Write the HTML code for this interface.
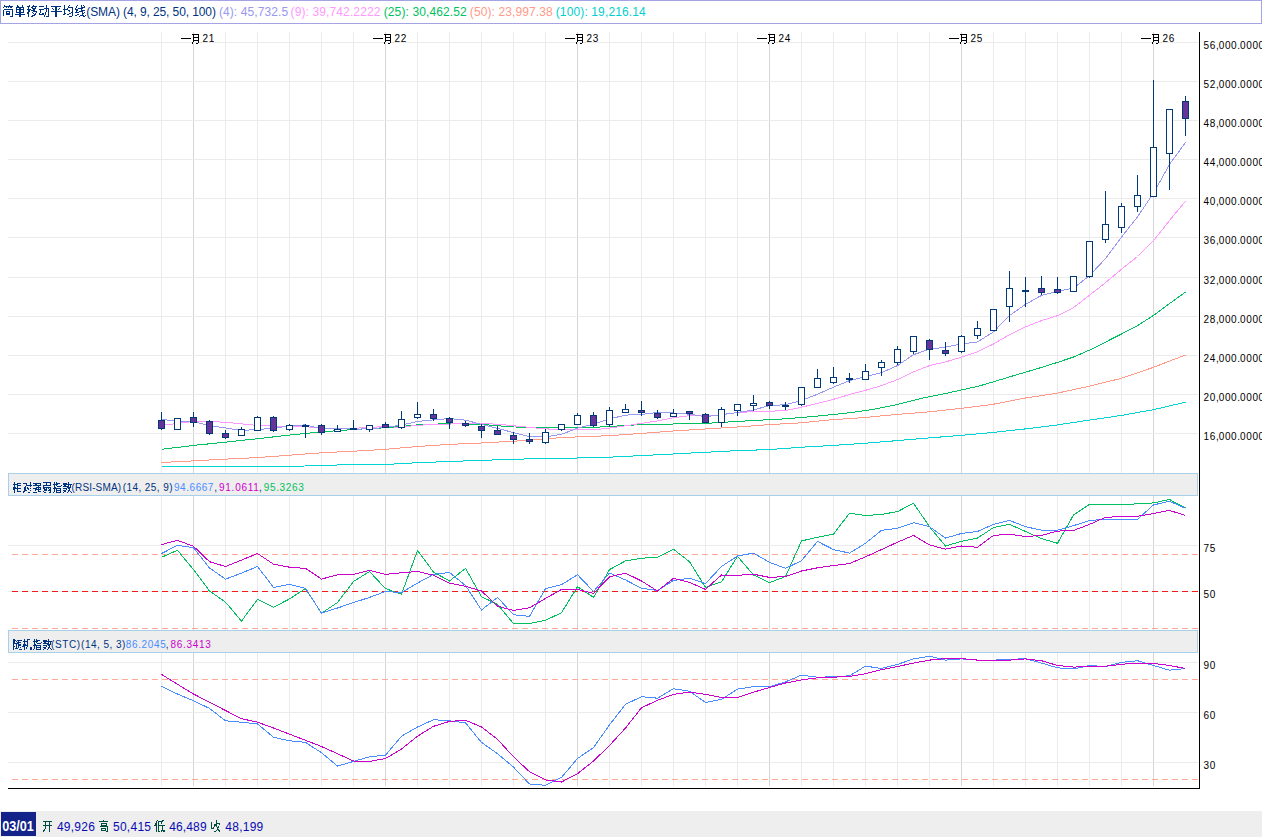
<!DOCTYPE html>
<html><head><meta charset="utf-8">
<style>
html,body{margin:0;padding:0;background:#fff;}
body{width:1262px;height:837px;position:relative;overflow:hidden;}
svg{position:absolute;left:0;top:0;display:block;}
text{font-family:"Liberation Sans",sans-serif;white-space:pre;}
</style></head><body>
<svg width="1262" height="837" viewBox="0 0 1262 837" shape-rendering="crispEdges">
<rect x="161" y="32" width="1" height="754" fill="#ebebeb"/>
<rect x="193" y="32" width="1" height="754" fill="#d6d6d6"/>
<rect x="225" y="32" width="1" height="754" fill="#ebebeb"/>
<rect x="257" y="32" width="1" height="754" fill="#ebebeb"/>
<rect x="289" y="32" width="1" height="754" fill="#ebebeb"/>
<rect x="321" y="32" width="1" height="754" fill="#ebebeb"/>
<rect x="353" y="32" width="1" height="754" fill="#ebebeb"/>
<rect x="385" y="32" width="1" height="754" fill="#d6d6d6"/>
<rect x="417" y="32" width="1" height="754" fill="#ebebeb"/>
<rect x="449" y="32" width="1" height="754" fill="#ebebeb"/>
<rect x="481" y="32" width="1" height="754" fill="#ebebeb"/>
<rect x="513" y="32" width="1" height="754" fill="#ebebeb"/>
<rect x="545" y="32" width="1" height="754" fill="#ebebeb"/>
<rect x="577" y="32" width="1" height="754" fill="#d6d6d6"/>
<rect x="609" y="32" width="1" height="754" fill="#ebebeb"/>
<rect x="641" y="32" width="1" height="754" fill="#ebebeb"/>
<rect x="673" y="32" width="1" height="754" fill="#ebebeb"/>
<rect x="705" y="32" width="1" height="754" fill="#ebebeb"/>
<rect x="737" y="32" width="1" height="754" fill="#ebebeb"/>
<rect x="769" y="32" width="1" height="754" fill="#d6d6d6"/>
<rect x="801" y="32" width="1" height="754" fill="#ebebeb"/>
<rect x="833" y="32" width="1" height="754" fill="#ebebeb"/>
<rect x="865" y="32" width="1" height="754" fill="#ebebeb"/>
<rect x="897" y="32" width="1" height="754" fill="#ebebeb"/>
<rect x="929" y="32" width="1" height="754" fill="#ebebeb"/>
<rect x="961" y="32" width="1" height="754" fill="#d6d6d6"/>
<rect x="993" y="32" width="1" height="754" fill="#ebebeb"/>
<rect x="1025" y="32" width="1" height="754" fill="#ebebeb"/>
<rect x="1057" y="32" width="1" height="754" fill="#ebebeb"/>
<rect x="1089" y="32" width="1" height="754" fill="#ebebeb"/>
<rect x="1121" y="32" width="1" height="754" fill="#ebebeb"/>
<rect x="1153" y="32" width="1" height="754" fill="#d6d6d6"/>
<rect x="8" y="42" width="1190" height="1" fill="#ebebeb"/>
<rect x="8" y="81" width="1190" height="1" fill="#ebebeb"/>
<rect x="8" y="120" width="1190" height="1" fill="#ebebeb"/>
<rect x="8" y="159" width="1190" height="1" fill="#ebebeb"/>
<rect x="8" y="198" width="1190" height="1" fill="#ebebeb"/>
<rect x="8" y="237" width="1190" height="1" fill="#ebebeb"/>
<rect x="8" y="277" width="1190" height="1" fill="#ebebeb"/>
<rect x="8" y="316" width="1190" height="1" fill="#ebebeb"/>
<rect x="8" y="355" width="1190" height="1" fill="#ebebeb"/>
<rect x="8" y="394" width="1190" height="1" fill="#ebebeb"/>
<rect x="8" y="433" width="1190" height="1" fill="#ebebeb"/>
<rect x="8" y="545" width="1190" height="1" fill="#ebebeb"/>
<rect x="8" y="591" width="1190" height="1" fill="#ebebeb"/>
<rect x="8" y="662" width="1190" height="1" fill="#ebebeb"/>
<rect x="8" y="712" width="1190" height="1" fill="#ebebeb"/>
<rect x="8" y="762" width="1190" height="1" fill="#ebebeb"/>
<line x1="12" y1="554.5" x2="1198" y2="554.5" stroke="#ffa898" stroke-width="1" stroke-dasharray="6 4"/>
<line x1="12" y1="591.5" x2="1198" y2="591.5" stroke="#ee1c1c" stroke-width="1" stroke-dasharray="6 4"/>
<line x1="12" y1="628.5" x2="1198" y2="628.5" stroke="#ffa898" stroke-width="1" stroke-dasharray="6 4"/>
<line x1="12" y1="679.5" x2="1198" y2="679.5" stroke="#ffa898" stroke-width="1" stroke-dasharray="6 4"/>
<line x1="12" y1="779.5" x2="1198" y2="779.5" stroke="#ffa898" stroke-width="1" stroke-dasharray="6 4"/>
<polyline points="161.5,466.4 177.5,466.4 193.5,466.4 209.5,466.3 225.5,466.3 241.5,466.3 257.5,466.3 273.5,466.2 289.5,466.2 305.5,466.0 321.5,465.5 337.5,465.0 353.5,464.6 369.5,464.5 385.5,464.5 401.5,463.6 417.5,462.7 433.5,462.1 449.5,461.5 465.5,460.9 481.5,460.4 497.5,459.8 513.5,459.2 529.5,458.9 545.5,458.7 561.5,458.5 577.5,458.0 593.5,457.6 609.5,457.2 625.5,456.4 641.5,455.6 657.5,454.8 673.5,454.0 689.5,453.1 705.5,452.3 721.5,451.5 737.5,450.6 753.5,450.1 769.5,449.6 785.5,448.4 801.5,447.2 817.5,446.3 833.5,445.4 849.5,444.3 865.5,443.2 881.5,441.9 897.5,440.6 913.5,439.2 929.5,437.9 945.5,436.6 961.5,435.3 977.5,433.9 993.5,432.4 1009.5,430.6 1025.5,428.9 1041.5,426.9 1057.5,424.9 1073.5,422.5 1089.5,420.1 1105.5,417.8 1121.5,415.4 1137.5,412.5 1153.5,409.7 1169.5,405.9 1185.5,402.2" fill="none" stroke="#00d4d4" stroke-width="1"/>
<polyline points="161.5,462.5 177.5,461.7 193.5,460.9 209.5,460.0 225.5,459.1 241.5,458.4 257.5,457.6 273.5,456.4 289.5,455.2 305.5,454.0 321.5,452.8 337.5,452.0 353.5,451.2 369.5,450.3 385.5,449.3 401.5,447.9 417.5,446.5 433.5,445.4 449.5,444.4 465.5,443.7 481.5,443.0 497.5,442.1 513.5,441.3 529.5,440.1 545.5,438.8 561.5,437.6 577.5,436.9 593.5,436.3 609.5,435.7 625.5,434.5 641.5,433.4 657.5,432.2 673.5,431.0 689.5,430.0 705.5,429.0 721.5,428.0 737.5,427.0 753.5,425.8 769.5,424.6 785.5,423.7 801.5,422.8 817.5,421.2 833.5,419.6 849.5,418.6 865.5,417.5 881.5,415.9 897.5,414.4 913.5,413.1 929.5,411.8 945.5,410.1 961.5,408.3 977.5,406.4 993.5,404.2 1009.5,401.1 1025.5,398.0 1041.5,395.6 1057.5,393.1 1073.5,389.6 1089.5,386.2 1105.5,382.2 1121.5,378.3 1137.5,372.8 1153.5,367.3 1169.5,361.1 1185.5,355.0" fill="none" stroke="#ff9a88" stroke-width="1"/>
<polyline points="161.5,449.3 177.5,447.4 193.5,445.4 209.5,443.8 225.5,442.2 241.5,440.4 257.5,438.7 273.5,436.9 289.5,435.1 305.5,433.5 321.5,431.9 337.5,430.7 353.5,429.5 369.5,428.6 385.5,427.8 401.5,426.4 417.5,424.9 433.5,424.2 449.5,423.5 465.5,423.9 481.5,424.4 497.5,425.7 513.5,427.0 529.5,427.1 545.5,427.6 561.5,427.4 577.5,427.3 593.5,427.4 609.5,426.5 625.5,425.4 641.5,424.7 657.5,424.7 673.5,424.0 689.5,423.5 705.5,423.4 721.5,422.4 737.5,421.5 753.5,420.5 769.5,419.7 785.5,418.8 801.5,417.5 817.5,416.1 833.5,414.5 849.5,412.7 865.5,410.6 881.5,407.8 897.5,404.4 913.5,400.3 929.5,396.6 945.5,393.5 961.5,389.9 977.5,386.5 993.5,381.8 1009.5,376.9 1025.5,372.2 1041.5,367.4 1057.5,362.4 1073.5,357.0 1089.5,350.1 1105.5,342.1 1121.5,334.0 1137.5,325.6 1153.5,315.4 1169.5,303.6 1185.5,292.1" fill="none" stroke="#00c060" stroke-width="1"/>
<polyline points="161.5,425.4 177.5,423.5 193.5,421.4 209.5,421.6 225.5,422.2 241.5,423.9 257.5,425.4 273.5,426.0 289.5,426.9 305.5,426.7 321.5,428.3 337.5,429.0 353.5,428.5 369.5,427.1 385.5,426.9 401.5,427.1 417.5,425.3 433.5,424.5 449.5,424.1 465.5,423.3 481.5,423.5 497.5,424.2 513.5,425.8 529.5,427.4 545.5,428.8 561.5,429.9 577.5,429.5 593.5,429.9 609.5,428.1 625.5,425.8 641.5,423.4 657.5,420.9 673.5,417.7 689.5,415.7 705.5,415.5 721.5,414.9 737.5,412.5 753.5,411.7 769.5,411.3 785.5,410.5 801.5,407.2 817.5,403.4 833.5,399.3 849.5,394.5 865.5,390.3 881.5,385.6 897.5,379.6 913.5,371.9 929.5,365.6 945.5,361.9 961.5,357.2 977.5,351.8 993.5,344.0 1009.5,334.7 1025.5,326.9 1041.5,320.6 1057.5,315.7 1073.5,307.6 1089.5,295.2 1105.5,282.7 1121.5,269.2 1137.5,256.5 1153.5,240.8 1169.5,220.5 1185.5,201.2" fill="none" stroke="#ff99ff" stroke-width="1"/>
<polyline points="161.5,419.1 177.5,421.6 193.5,421.6 209.5,425.7 225.5,427.9 241.5,430.6 257.5,429.3 273.5,428.6 289.5,425.6 305.5,424.9 321.5,428.8 337.5,428.3 353.5,429.1 369.5,428.9 385.5,427.4 401.5,425.1 417.5,421.5 433.5,419.8 449.5,418.6 465.5,420.2 481.5,424.3 497.5,428.3 513.5,432.6 529.5,436.6 545.5,436.8 561.5,434.3 577.5,428.2 593.5,424.2 609.5,418.9 625.5,415.1 641.5,414.4 657.5,412.5 673.5,413.0 689.5,414.2 705.5,416.7 721.5,414.6 737.5,412.5 753.5,409.9 769.5,405.6 785.5,404.7 801.5,400.5 817.5,394.2 833.5,387.2 849.5,380.6 865.5,376.6 881.5,372.6 897.5,365.6 913.5,354.7 929.5,349.2 945.5,347.1 961.5,343.9 977.5,341.9 993.5,331.9 1009.5,315.6 1025.5,304.4 1041.5,295.4 1057.5,291.2 1073.5,288.2 1089.5,275.6 1105.5,258.6 1121.5,237.1 1137.5,216.8 1153.5,193.2 1169.5,164.4 1185.5,142.5" fill="none" stroke="#9898f0" stroke-width="1"/>
<rect x="161" y="412" width="1" height="18" fill="#003878"/>
<rect x="158.5" y="420.5" width="6" height="8" fill="#663399" stroke="#003878" stroke-width="1"/>
<rect x="177" y="418" width="1" height="12" fill="#003878"/>
<rect x="174.5" y="418.5" width="6" height="11" fill="#ffffff" stroke="#003878" stroke-width="1"/>
<rect x="193" y="412" width="1" height="15" fill="#003878"/>
<rect x="190.5" y="417.5" width="6" height="5" fill="#663399" stroke="#003878" stroke-width="1"/>
<rect x="209" y="420" width="1" height="15" fill="#003878"/>
<rect x="206.5" y="421.5" width="6" height="12" fill="#663399" stroke="#003878" stroke-width="1"/>
<rect x="225" y="430" width="1" height="9" fill="#003878"/>
<rect x="222.5" y="433.5" width="6" height="4" fill="#663399" stroke="#003878" stroke-width="1"/>
<rect x="241" y="427" width="1" height="9" fill="#003878"/>
<rect x="238.5" y="429.5" width="6" height="6" fill="#ffffff" stroke="#003878" stroke-width="1"/>
<rect x="257" y="416" width="1" height="15" fill="#003878"/>
<rect x="254.5" y="417.5" width="6" height="13" fill="#ffffff" stroke="#003878" stroke-width="1"/>
<rect x="273" y="416" width="1" height="16" fill="#003878"/>
<rect x="270.5" y="417.5" width="6" height="13" fill="#663399" stroke="#003878" stroke-width="1"/>
<rect x="289" y="424" width="1" height="7" fill="#003878"/>
<rect x="286.5" y="425.5" width="6" height="4" fill="#ffffff" stroke="#003878" stroke-width="1"/>
<rect x="305" y="424" width="1" height="14" fill="#003878"/>
<rect x="302.5" y="425.5" width="6" height="1" fill="#663399" stroke="#003878" stroke-width="1"/>
<rect x="321" y="424" width="1" height="11" fill="#003878"/>
<rect x="318.5" y="425.5" width="6" height="7" fill="#663399" stroke="#003878" stroke-width="1"/>
<rect x="337" y="425" width="1" height="7" fill="#003878"/>
<rect x="334.5" y="429.5" width="6" height="2" fill="#ffffff" stroke="#003878" stroke-width="1"/>
<rect x="353" y="420" width="1" height="9" fill="#003878"/>
<rect x="350.5" y="428.5" width="6" height="1" fill="#663399" stroke="#003878" stroke-width="1"/>
<rect x="369" y="425" width="1" height="7" fill="#003878"/>
<rect x="366.5" y="425.5" width="6" height="4" fill="#ffffff" stroke="#003878" stroke-width="1"/>
<rect x="385" y="422" width="1" height="6" fill="#003878"/>
<rect x="382.5" y="424.5" width="6" height="3" fill="#663399" stroke="#003878" stroke-width="1"/>
<rect x="401" y="411" width="1" height="18" fill="#003878"/>
<rect x="398.5" y="419.5" width="6" height="8" fill="#ffffff" stroke="#003878" stroke-width="1"/>
<rect x="417" y="402" width="1" height="17" fill="#003878"/>
<rect x="414.5" y="414.5" width="6" height="3" fill="#ffffff" stroke="#003878" stroke-width="1"/>
<rect x="433" y="409" width="1" height="12" fill="#003878"/>
<rect x="430.5" y="414.5" width="6" height="4" fill="#663399" stroke="#003878" stroke-width="1"/>
<rect x="449" y="417" width="1" height="12" fill="#003878"/>
<rect x="446.5" y="418.5" width="6" height="4" fill="#663399" stroke="#003878" stroke-width="1"/>
<rect x="465" y="421" width="1" height="6" fill="#003878"/>
<rect x="462.5" y="423.5" width="6" height="2" fill="#663399" stroke="#003878" stroke-width="1"/>
<rect x="481" y="424" width="1" height="14" fill="#003878"/>
<rect x="478.5" y="426.5" width="6" height="4" fill="#663399" stroke="#003878" stroke-width="1"/>
<rect x="497" y="426" width="1" height="9" fill="#003878"/>
<rect x="494.5" y="430.5" width="6" height="4" fill="#663399" stroke="#003878" stroke-width="1"/>
<rect x="513" y="432" width="1" height="12" fill="#003878"/>
<rect x="510.5" y="435.5" width="6" height="4" fill="#663399" stroke="#003878" stroke-width="1"/>
<rect x="529" y="433" width="1" height="11" fill="#003878"/>
<rect x="526.5" y="439.5" width="6" height="2" fill="#663399" stroke="#003878" stroke-width="1"/>
<rect x="545" y="429" width="1" height="15" fill="#003878"/>
<rect x="542.5" y="432.5" width="6" height="10" fill="#ffffff" stroke="#003878" stroke-width="1"/>
<rect x="561" y="424" width="1" height="7" fill="#003878"/>
<rect x="558.5" y="424.5" width="6" height="5" fill="#ffffff" stroke="#003878" stroke-width="1"/>
<rect x="577" y="413" width="1" height="12" fill="#003878"/>
<rect x="574.5" y="415.5" width="6" height="9" fill="#ffffff" stroke="#003878" stroke-width="1"/>
<rect x="593" y="412" width="1" height="15" fill="#003878"/>
<rect x="590.5" y="415.5" width="6" height="10" fill="#663399" stroke="#003878" stroke-width="1"/>
<rect x="609" y="407" width="1" height="20" fill="#003878"/>
<rect x="606.5" y="410.5" width="6" height="14" fill="#ffffff" stroke="#003878" stroke-width="1"/>
<rect x="625" y="404" width="1" height="9" fill="#003878"/>
<rect x="622.5" y="409.5" width="6" height="3" fill="#ffffff" stroke="#003878" stroke-width="1"/>
<rect x="641" y="401" width="1" height="15" fill="#003878"/>
<rect x="638.5" y="410.5" width="6" height="2" fill="#663399" stroke="#003878" stroke-width="1"/>
<rect x="657" y="410" width="1" height="9" fill="#003878"/>
<rect x="654.5" y="413.5" width="6" height="4" fill="#663399" stroke="#003878" stroke-width="1"/>
<rect x="673" y="409" width="1" height="8" fill="#003878"/>
<rect x="670.5" y="413.5" width="6" height="3" fill="#ffffff" stroke="#003878" stroke-width="1"/>
<rect x="689" y="411" width="1" height="9" fill="#003878"/>
<rect x="686.5" y="411.5" width="6" height="2" fill="#663399" stroke="#003878" stroke-width="1"/>
<rect x="705" y="413" width="1" height="10" fill="#003878"/>
<rect x="702.5" y="414.5" width="6" height="8" fill="#663399" stroke="#003878" stroke-width="1"/>
<rect x="721" y="407" width="1" height="20" fill="#003878"/>
<rect x="718.5" y="409.5" width="6" height="13" fill="#ffffff" stroke="#003878" stroke-width="1"/>
<rect x="737" y="404" width="1" height="12" fill="#003878"/>
<rect x="734.5" y="404.5" width="6" height="6" fill="#ffffff" stroke="#003878" stroke-width="1"/>
<rect x="753" y="395" width="1" height="16" fill="#003878"/>
<rect x="750.5" y="403.5" width="6" height="2" fill="#ffffff" stroke="#003878" stroke-width="1"/>
<rect x="769" y="401" width="1" height="8" fill="#003878"/>
<rect x="766.5" y="402.5" width="6" height="3" fill="#663399" stroke="#003878" stroke-width="1"/>
<rect x="785" y="402" width="1" height="8" fill="#003878"/>
<rect x="782.5" y="405.5" width="6" height="1" fill="#663399" stroke="#003878" stroke-width="1"/>
<rect x="801" y="387" width="1" height="19" fill="#003878"/>
<rect x="798.5" y="387.5" width="6" height="17" fill="#ffffff" stroke="#003878" stroke-width="1"/>
<rect x="817" y="369" width="1" height="19" fill="#003878"/>
<rect x="814.5" y="378.5" width="6" height="9" fill="#ffffff" stroke="#003878" stroke-width="1"/>
<rect x="833" y="367" width="1" height="17" fill="#003878"/>
<rect x="830.5" y="377.5" width="6" height="5" fill="#ffffff" stroke="#003878" stroke-width="1"/>
<rect x="849" y="373" width="1" height="10" fill="#003878"/>
<rect x="846.5" y="378.5" width="6" height="1" fill="#663399" stroke="#003878" stroke-width="1"/>
<rect x="865" y="364" width="1" height="16" fill="#003878"/>
<rect x="862.5" y="371.5" width="6" height="8" fill="#ffffff" stroke="#003878" stroke-width="1"/>
<rect x="881" y="360" width="1" height="16" fill="#003878"/>
<rect x="878.5" y="362.5" width="6" height="5" fill="#ffffff" stroke="#003878" stroke-width="1"/>
<rect x="897" y="346" width="1" height="19" fill="#003878"/>
<rect x="894.5" y="349.5" width="6" height="13" fill="#ffffff" stroke="#003878" stroke-width="1"/>
<rect x="913" y="336" width="1" height="18" fill="#003878"/>
<rect x="910.5" y="336.5" width="6" height="15" fill="#ffffff" stroke="#003878" stroke-width="1"/>
<rect x="929" y="339" width="1" height="21" fill="#003878"/>
<rect x="926.5" y="340.5" width="6" height="9" fill="#663399" stroke="#003878" stroke-width="1"/>
<rect x="945" y="342" width="1" height="14" fill="#003878"/>
<rect x="942.5" y="350.5" width="6" height="3" fill="#663399" stroke="#003878" stroke-width="1"/>
<rect x="961" y="335" width="1" height="18" fill="#003878"/>
<rect x="958.5" y="336.5" width="6" height="15" fill="#ffffff" stroke="#003878" stroke-width="1"/>
<rect x="977" y="321" width="1" height="18" fill="#003878"/>
<rect x="974.5" y="328.5" width="6" height="7" fill="#ffffff" stroke="#003878" stroke-width="1"/>
<rect x="993" y="309" width="1" height="22" fill="#003878"/>
<rect x="990.5" y="309.5" width="6" height="21" fill="#ffffff" stroke="#003878" stroke-width="1"/>
<rect x="1009" y="271" width="1" height="51" fill="#003878"/>
<rect x="1006.5" y="288.5" width="6" height="18" fill="#ffffff" stroke="#003878" stroke-width="1"/>
<rect x="1025" y="277" width="1" height="30" fill="#003878"/>
<rect x="1022.5" y="290.5" width="6" height="1" fill="#663399" stroke="#003878" stroke-width="1"/>
<rect x="1041" y="276" width="1" height="19" fill="#003878"/>
<rect x="1038.5" y="288.5" width="6" height="4" fill="#663399" stroke="#003878" stroke-width="1"/>
<rect x="1057" y="277" width="1" height="17" fill="#003878"/>
<rect x="1054.5" y="289.5" width="6" height="3" fill="#663399" stroke="#003878" stroke-width="1"/>
<rect x="1073" y="276" width="1" height="16" fill="#003878"/>
<rect x="1070.5" y="276.5" width="6" height="15" fill="#ffffff" stroke="#003878" stroke-width="1"/>
<rect x="1089" y="241" width="1" height="37" fill="#003878"/>
<rect x="1086.5" y="241.5" width="6" height="35" fill="#ffffff" stroke="#003878" stroke-width="1"/>
<rect x="1105" y="191" width="1" height="52" fill="#003878"/>
<rect x="1102.5" y="224.5" width="6" height="15" fill="#ffffff" stroke="#003878" stroke-width="1"/>
<rect x="1121" y="203" width="1" height="30" fill="#003878"/>
<rect x="1118.5" y="206.5" width="6" height="21" fill="#ffffff" stroke="#003878" stroke-width="1"/>
<rect x="1137" y="175" width="1" height="37" fill="#003878"/>
<rect x="1134.5" y="195.5" width="6" height="11" fill="#ffffff" stroke="#003878" stroke-width="1"/>
<rect x="1153" y="80" width="1" height="117" fill="#003878"/>
<rect x="1150.5" y="147.5" width="6" height="49" fill="#ffffff" stroke="#003878" stroke-width="1"/>
<rect x="1169" y="109" width="1" height="81" fill="#003878"/>
<rect x="1166.5" y="109.5" width="6" height="44" fill="#ffffff" stroke="#003878" stroke-width="1"/>
<rect x="1185" y="96" width="1" height="40" fill="#003878"/>
<rect x="1182.5" y="101.5" width="6" height="17" fill="#663399" stroke="#003878" stroke-width="1"/>
<rect x="8.5" y="473.5" width="1189" height="22" fill="#eeeeee" stroke="#a9d0ea" stroke-width="1"/>
<rect x="8.5" y="630.5" width="1189" height="22" fill="#eeeeee" stroke="#a9d0ea" stroke-width="1"/>
<polyline points="161.5,557.3 177.5,550.3 193.5,569.6 209.5,591.0 225.5,602.1 241.5,621.1 257.5,599.4 273.5,607.3 289.5,598.9 305.5,588.6 321.5,613.2 337.5,602.5 353.5,581.5 369.5,571.5 385.5,588.6 401.5,594.2 417.5,550.6 433.5,572.0 449.5,581.0 465.5,568.4 481.5,596.6 497.5,604.5 513.5,623.5 529.5,623.5 545.5,620.3 561.5,612.7 577.5,586.7 593.5,597.4 609.5,569.6 625.5,560.9 641.5,558.2 657.5,557.3 673.5,549.3 689.5,561.7 705.5,587.4 721.5,581.8 737.5,556.3 753.5,575.0 769.5,582.6 785.5,576.6 801.5,540.9 817.5,537.3 833.5,534.1 849.5,513.2 865.5,515.5 881.5,514.4 897.5,511.6 913.5,503.2 929.5,526.7 945.5,546.0 961.5,541.3 977.5,538.1 993.5,527.5 1009.5,524.3 1025.5,531.5 1041.5,538.6 1057.5,543.3 1073.5,515.0 1089.5,504.4 1105.5,504.4 1121.5,504.4 1137.5,503.9 1153.5,502.9 1169.5,499.5 1185.5,508.0" fill="none" stroke="#00c060" stroke-width="1"/>
<polyline points="161.5,553.5 177.5,545.4 193.5,547.7 209.5,568.0 225.5,579.1 241.5,573.1 257.5,566.5 273.5,587.4 289.5,584.4 305.5,588.3 321.5,613.2 337.5,608.0 353.5,602.6 369.5,597.4 385.5,591.5 401.5,592.6 417.5,583.1 433.5,574.4 449.5,572.5 465.5,585.5 481.5,610.0 497.5,597.4 513.5,614.8 529.5,616.4 545.5,588.6 561.5,584.7 577.5,574.7 593.5,591.5 609.5,573.1 625.5,579.9 641.5,588.3 657.5,590.5 673.5,580.4 689.5,578.3 705.5,583.6 721.5,566.5 737.5,556.0 753.5,553.1 769.5,562.3 785.5,568.3 801.5,560.7 817.5,541.4 833.5,549.6 849.5,553.1 865.5,543.3 881.5,530.3 897.5,528.3 913.5,522.7 929.5,526.7 945.5,538.1 961.5,533.4 977.5,531.5 993.5,524.3 1009.5,520.4 1025.5,526.7 1041.5,530.2 1057.5,530.2 1073.5,525.7 1089.5,520.4 1105.5,519.4 1121.5,519.4 1137.5,519.4 1153.5,504.9 1169.5,501.3 1185.5,508.3" fill="none" stroke="#4a8cff" stroke-width="1"/>
<polyline points="161.5,544.6 177.5,540.3 193.5,546.3 209.5,561.7 225.5,566.5 241.5,560.1 257.5,553.5 273.5,564.1 289.5,567.2 305.5,568.4 321.5,579.1 337.5,574.8 353.5,574.4 369.5,570.4 385.5,574.4 401.5,572.8 417.5,571.5 433.5,575.2 449.5,583.1 465.5,586.3 481.5,591.0 497.5,606.1 513.5,610.5 529.5,607.7 545.5,598.5 561.5,589.4 577.5,589.4 593.5,593.4 609.5,576.8 625.5,573.1 641.5,581.0 657.5,591.0 673.5,578.3 689.5,582.3 705.5,589.4 721.5,575.0 737.5,575.3 753.5,574.2 769.5,577.4 785.5,576.6 801.5,571.0 817.5,567.8 833.5,565.5 849.5,563.6 865.5,556.8 881.5,549.6 897.5,542.2 913.5,535.4 929.5,544.9 945.5,549.2 961.5,546.0 977.5,547.3 993.5,535.4 1009.5,534.3 1025.5,536.5 1041.5,535.4 1057.5,531.1 1073.5,530.5 1089.5,524.4 1105.5,517.3 1121.5,516.6 1137.5,516.3 1153.5,513.5 1169.5,510.4 1185.5,515.5" fill="none" stroke="#cc00cc" stroke-width="1"/>
<polyline points="161.5,686.4 177.5,694.0 193.5,700.8 209.5,708.4 225.5,720.8 241.5,722.2 257.5,723.9 273.5,737.3 289.5,740.8 305.5,742.4 321.5,752.7 337.5,766.1 353.5,761.4 369.5,756.8 385.5,755.2 401.5,736.2 417.5,727.0 433.5,719.7 449.5,720.8 465.5,722.8 481.5,742.4 497.5,753.7 513.5,767.1 529.5,784.0 545.5,785.3 561.5,777.4 577.5,758.5 593.5,747.6 609.5,724.9 625.5,704.3 641.5,696.7 657.5,698.2 673.5,688.7 689.5,691.2 705.5,702.5 721.5,699.4 737.5,689.1 753.5,686.7 769.5,686.7 785.5,681.9 801.5,675.1 817.5,677.2 833.5,676.8 849.5,675.8 865.5,666.1 881.5,668.5 897.5,664.4 913.5,658.9 929.5,656.2 945.5,660.1 961.5,658.9 977.5,660.1 993.5,660.1 1009.5,659.5 1025.5,658.6 1041.5,663.1 1057.5,667.8 1073.5,669.0 1089.5,665.5 1105.5,666.6 1121.5,662.4 1137.5,660.7 1153.5,665.5 1169.5,670.2 1185.5,668.6" fill="none" stroke="#4a8cff" stroke-width="1"/>
<polyline points="161.5,674.4 177.5,684.3 193.5,694.0 209.5,702.2 225.5,710.5 241.5,718.7 257.5,722.2 273.5,728.0 289.5,734.2 305.5,740.3 321.5,746.5 337.5,753.7 353.5,761.0 369.5,761.4 385.5,758.5 401.5,749.1 417.5,736.2 433.5,726.3 449.5,721.4 465.5,720.2 481.5,727.0 497.5,739.3 513.5,756.8 529.5,771.7 545.5,779.9 561.5,782.0 577.5,773.7 593.5,761.0 609.5,745.5 625.5,728.0 641.5,707.8 657.5,700.3 673.5,694.3 689.5,692.2 705.5,694.3 721.5,697.4 737.5,697.4 753.5,692.2 769.5,687.5 785.5,683.0 801.5,679.9 817.5,677.8 833.5,677.2 849.5,676.4 865.5,673.7 881.5,669.6 897.5,666.5 913.5,663.1 929.5,660.1 945.5,658.6 961.5,658.6 977.5,660.1 993.5,660.1 1009.5,660.1 1025.5,658.9 1041.5,660.7 1057.5,665.5 1073.5,667.1 1089.5,666.6 1105.5,666.2 1121.5,664.3 1137.5,663.1 1153.5,663.5 1169.5,665.5 1185.5,668.5" fill="none" stroke="#cc00cc" stroke-width="1"/>
<rect x="1199" y="32" width="1" height="757" fill="#000"/>
<rect x="8" y="788" width="1192" height="1" fill="#000"/>
<text x="1203.55 1209.70 1216.00 1218.75 1224.90 1231.05 1237.35 1240.10 1246.25 1252.40 1258.55" y="49" fill="#000" font-size="10">56,000.0000</text>
<text x="1203.55 1209.70 1216.00 1218.75 1224.90 1231.05 1237.35 1240.10 1246.25 1252.40 1258.55" y="88" fill="#000" font-size="10">52,000.0000</text>
<text x="1203.55 1209.70 1216.00 1218.75 1224.90 1231.05 1237.35 1240.10 1246.25 1252.40 1258.55" y="127" fill="#000" font-size="10">48,000.0000</text>
<text x="1203.55 1209.70 1216.00 1218.75 1224.90 1231.05 1237.35 1240.10 1246.25 1252.40 1258.55" y="166" fill="#000" font-size="10">44,000.0000</text>
<text x="1203.55 1209.70 1216.00 1218.75 1224.90 1231.05 1237.35 1240.10 1246.25 1252.40 1258.55" y="205" fill="#000" font-size="10">40,000.0000</text>
<text x="1203.55 1209.70 1216.00 1218.75 1224.90 1231.05 1237.35 1240.10 1246.25 1252.40 1258.55" y="244" fill="#000" font-size="10">36,000.0000</text>
<text x="1203.55 1209.70 1216.00 1218.75 1224.90 1231.05 1237.35 1240.10 1246.25 1252.40 1258.55" y="284" fill="#000" font-size="10">32,000.0000</text>
<text x="1203.55 1209.70 1216.00 1218.75 1224.90 1231.05 1237.35 1240.10 1246.25 1252.40 1258.55" y="323" fill="#000" font-size="10">28,000.0000</text>
<text x="1203.55 1209.70 1216.00 1218.75 1224.90 1231.05 1237.35 1240.10 1246.25 1252.40 1258.55" y="362" fill="#000" font-size="10">24,000.0000</text>
<text x="1203.55 1209.70 1216.00 1218.75 1224.90 1231.05 1237.35 1240.10 1246.25 1252.40 1258.55" y="401" fill="#000" font-size="10">20,000.0000</text>
<text x="1203.55 1209.70 1216.00 1218.75 1224.90 1231.05 1237.35 1240.10 1246.25 1252.40 1258.55" y="440" fill="#000" font-size="10">16,000.0000</text>
<text x="1203.55 1209.70" y="552" fill="#000" font-size="10">75</text>
<text x="1203.55 1209.70" y="598" fill="#000" font-size="10">50</text>
<text x="1203.55 1209.70" y="669" fill="#000" font-size="10">90</text>
<text x="1203.55 1209.70" y="719" fill="#000" font-size="10">60</text>
<text x="1203.55 1209.70" y="769" fill="#000" font-size="10">30</text>
<rect x="181" y="38" width="10" height="1" fill="#000"/>
<rect x="192" y="34" width="7" height="1" fill="#000"/>
<rect x="193" y="35" width="1" height="7" fill="#000"/>
<rect x="198" y="35" width="1" height="8" fill="#000"/>
<rect x="194" y="37" width="4" height="1" fill="#000"/>
<rect x="194" y="40" width="4" height="1" fill="#000"/>
<rect x="192" y="42" width="1" height="2" fill="#000"/>
<rect x="196" y="43" width="2" height="1" fill="#000"/>
<text x="202.55 208.70" y="42" fill="#000" font-size="10">21</text>
<rect x="373" y="38" width="10" height="1" fill="#000"/>
<rect x="384" y="34" width="7" height="1" fill="#000"/>
<rect x="385" y="35" width="1" height="7" fill="#000"/>
<rect x="390" y="35" width="1" height="8" fill="#000"/>
<rect x="386" y="37" width="4" height="1" fill="#000"/>
<rect x="386" y="40" width="4" height="1" fill="#000"/>
<rect x="384" y="42" width="1" height="2" fill="#000"/>
<rect x="388" y="43" width="2" height="1" fill="#000"/>
<text x="394.55 400.70" y="42" fill="#000" font-size="10">22</text>
<rect x="565" y="38" width="10" height="1" fill="#000"/>
<rect x="576" y="34" width="7" height="1" fill="#000"/>
<rect x="577" y="35" width="1" height="7" fill="#000"/>
<rect x="582" y="35" width="1" height="8" fill="#000"/>
<rect x="578" y="37" width="4" height="1" fill="#000"/>
<rect x="578" y="40" width="4" height="1" fill="#000"/>
<rect x="576" y="42" width="1" height="2" fill="#000"/>
<rect x="580" y="43" width="2" height="1" fill="#000"/>
<text x="586.55 592.70" y="42" fill="#000" font-size="10">23</text>
<rect x="757" y="38" width="10" height="1" fill="#000"/>
<rect x="768" y="34" width="7" height="1" fill="#000"/>
<rect x="769" y="35" width="1" height="7" fill="#000"/>
<rect x="774" y="35" width="1" height="8" fill="#000"/>
<rect x="770" y="37" width="4" height="1" fill="#000"/>
<rect x="770" y="40" width="4" height="1" fill="#000"/>
<rect x="768" y="42" width="1" height="2" fill="#000"/>
<rect x="772" y="43" width="2" height="1" fill="#000"/>
<text x="778.55 784.70" y="42" fill="#000" font-size="10">24</text>
<rect x="949" y="38" width="10" height="1" fill="#000"/>
<rect x="960" y="34" width="7" height="1" fill="#000"/>
<rect x="961" y="35" width="1" height="7" fill="#000"/>
<rect x="966" y="35" width="1" height="8" fill="#000"/>
<rect x="962" y="37" width="4" height="1" fill="#000"/>
<rect x="962" y="40" width="4" height="1" fill="#000"/>
<rect x="960" y="42" width="1" height="2" fill="#000"/>
<rect x="964" y="43" width="2" height="1" fill="#000"/>
<text x="970.55 976.70" y="42" fill="#000" font-size="10">25</text>
<rect x="1141" y="38" width="10" height="1" fill="#000"/>
<rect x="1152" y="34" width="7" height="1" fill="#000"/>
<rect x="1153" y="35" width="1" height="7" fill="#000"/>
<rect x="1158" y="35" width="1" height="8" fill="#000"/>
<rect x="1154" y="37" width="4" height="1" fill="#000"/>
<rect x="1154" y="40" width="4" height="1" fill="#000"/>
<rect x="1152" y="42" width="1" height="2" fill="#000"/>
<rect x="1156" y="43" width="2" height="1" fill="#000"/>
<text x="1162.55 1168.70" y="42" fill="#000" font-size="10">26</text>
<rect x="0.5" y="0.5" width="1261" height="23" fill="none" stroke="#a4a4e4" stroke-width="1"/>
<text x="86.30" y="16" fill="#00337f" font-size="12" font-weight="normal" textLength="129.60" lengthAdjust="spacing">(SMA) (4, 9, 25, 50, 100)</text>
<text x="218.90" y="16" fill="#9898f0" font-size="12" font-weight="normal" textLength="69.30" lengthAdjust="spacing">(4): 45,732.5</text>
<text x="290.60" y="16" fill="#ff99ff" font-size="12" font-weight="normal" textLength="89.80" lengthAdjust="spacing">(9): 39,742.2222</text>
<text x="383.70" y="16" fill="#00c060" font-size="12" font-weight="normal" textLength="83.10" lengthAdjust="spacing">(25): 30,462.52</text>
<text x="469.80" y="16" fill="#ff9a88" font-size="12" font-weight="normal" textLength="82.90" lengthAdjust="spacing">(50): 23,997.38</text>
<text x="555.70" y="16" fill="#00d0d0" font-size="12" font-weight="normal" textLength="90.10" lengthAdjust="spacing">(100): 19,216.14</text>
<text x="71.50" y="491" fill="#00337f" font-size="10" font-weight="normal" textLength="49.60" lengthAdjust="spacing">(RSI-SMA)</text>
<text x="122.80" y="491" fill="#00337f" font-size="10" font-weight="normal" textLength="49.70" lengthAdjust="spacing">(14, 25, 9)</text>
<text x="174.00" y="491" fill="#4a8cff" font-size="10" font-weight="normal" textLength="39.40" lengthAdjust="spacing">94.6667</text>
<text x="214.30" y="491" fill="#00337f" font-size="10">,</text>
<text x="219.00" y="491" fill="#cc00cc" font-size="10" font-weight="normal" textLength="39.90" lengthAdjust="spacing">91.0611</text>
<text x="259.10" y="491" fill="#00337f" font-size="10">,</text>
<text x="263.80" y="491" fill="#00c060" font-size="10" font-weight="normal" textLength="39.90" lengthAdjust="spacing">95.3263</text>
<text x="51.00" y="648" fill="#00337f" font-size="10" font-weight="normal" textLength="29.20" lengthAdjust="spacing">(STC)</text>
<text x="81.10" y="648" fill="#00337f" font-size="10" font-weight="normal" textLength="44.20" lengthAdjust="spacing">(14, 5, 3)</text>
<text x="125.80" y="648" fill="#4a8cff" font-size="10" font-weight="normal" textLength="39.90" lengthAdjust="spacing">86.2045</text>
<text x="165.70" y="648" fill="#00337f" font-size="10">,</text>
<text x="170.50" y="648" fill="#cc00cc" font-size="10" font-weight="normal" textLength="40.40" lengthAdjust="spacing">86.3413</text>
<rect x="0" y="811" width="1262" height="26" fill="#eeeeee"/>
<rect x="1" y="812" width="35" height="24" fill="#13238a"/>
<text x="2.20" y="831" fill="#ffffff" font-size="14" font-weight="bold" textLength="31.70" lengthAdjust="spacingAndGlyphs">03/01</text>
<text x="56.90" y="831" fill="#0a0ab4" font-size="12" font-weight="normal" textLength="38.00" lengthAdjust="spacing">49,926</text>
<text x="113.00" y="831" fill="#0a0ab4" font-size="12" font-weight="normal" textLength="38.00" lengthAdjust="spacing">50,415</text>
<text x="169.20" y="831" fill="#0a0ab4" font-size="12" font-weight="normal" textLength="37.40" lengthAdjust="spacing">46,489</text>
<text x="225.30" y="831" fill="#0a0ab4" font-size="12" font-weight="normal" textLength="38.00" lengthAdjust="spacing">48,199</text>
<path fill="#00337f" d="M4 5h1v1h-1zM9 5h1v1h-1zM17 5h1v1h-1zM22 5h1v1h-1zM29 5h1v1h-1zM33 5h1v1h-1zM46 5h1v1h-1zM64 5h1v1h-1zM69 5h1v1h-1zM77 5h1v1h-1zM81 5h1v1h-1zM83 5h1v1h-1zM4 6h9v1h-9zM17 6h2v1h-2zM22 6h1v1h-1zM27 6h3v1h-3zM32 6h5v1h-5zM39 6h5v1h-5zM46 6h1v1h-1zM51 6h10v1h-10zM64 6h1v1h-1zM68 6h1v1h-1zM76 6h1v1h-1zM81 6h1v1h-1zM84 6h1v1h-1zM3 7h1v1h-1zM6 7h1v1h-1zM8 7h1v1h-1zM10 7h2v1h-2zM16 7h8v1h-8zM28 7h1v1h-1zM31 7h2v1h-2zM35 7h1v1h-1zM46 7h1v1h-1zM55 7h2v1h-2zM64 7h1v1h-1zM68 7h5v1h-5zM76 7h1v1h-1zM81 7h4v1h-4zM16 8h1v1h-1zM19 8h2v1h-2zM23 8h1v1h-1zM28 8h1v1h-1zM32 8h4v1h-4zM44 8h5v1h-5zM52 8h1v1h-1zM55 8h2v1h-2zM59 8h1v1h-1zM64 8h1v1h-1zM67 8h1v1h-1zM72 8h1v1h-1zM75 8h1v1h-1zM78 8h5v1h-5zM4 9h9v1h-9zM16 9h8v1h-8zM27 9h4v1h-4zM33 9h2v1h-2zM39 9h5v1h-5zM46 9h1v1h-1zM48 9h1v1h-1zM53 9h1v1h-1zM55 9h2v1h-2zM58 9h1v1h-1zM63 9h5v1h-5zM72 9h1v1h-1zM75 9h3v1h-3zM81 9h1v1h-1zM3 10h1v1h-1zM12 10h1v1h-1zM16 10h1v1h-1zM19 10h2v1h-2zM23 10h1v1h-1zM28 10h2v1h-2zM31 10h4v1h-4zM40 10h1v1h-1zM46 10h1v1h-1zM48 10h1v1h-1zM55 10h2v1h-2zM64 10h1v1h-1zM68 10h2v1h-2zM72 10h1v1h-1zM76 10h2v1h-2zM81 10h4v1h-4zM3 11h1v1h-1zM6 11h4v1h-4zM12 11h1v1h-1zM16 11h1v1h-1zM19 11h2v1h-2zM23 11h1v1h-1zM28 11h2v1h-2zM33 11h4v1h-4zM40 11h1v1h-1zM46 11h1v1h-1zM48 11h1v1h-1zM51 11h11v1h-11zM64 11h1v1h-1zM69 11h1v1h-1zM72 11h1v1h-1zM76 11h1v1h-1zM79 11h4v1h-4zM3 12h1v1h-1zM6 12h1v1h-1zM9 12h1v1h-1zM12 12h1v1h-1zM16 12h8v1h-8zM27 12h2v1h-2zM32 12h1v1h-1zM36 12h1v1h-1zM40 12h1v1h-1zM45 12h1v1h-1zM48 12h1v1h-1zM55 12h2v1h-2zM64 12h1v1h-1zM71 12h2v1h-2zM75 12h4v1h-4zM82 12h1v1h-1zM84 12h1v1h-1zM3 13h1v1h-1zM6 13h4v1h-4zM12 13h1v1h-1zM19 13h2v1h-2zM27 13h2v1h-2zM33 13h1v1h-1zM35 13h1v1h-1zM39 13h1v1h-1zM42 13h2v1h-2zM45 13h1v1h-1zM48 13h1v1h-1zM55 13h2v1h-2zM64 13h2v1h-2zM69 13h2v1h-2zM72 13h1v1h-1zM82 13h2v1h-2zM3 14h1v1h-1zM6 14h4v1h-4zM12 14h1v1h-1zM15 14h10v1h-10zM28 14h1v1h-1zM34 14h2v1h-2zM39 14h5v1h-5zM45 14h1v1h-1zM48 14h1v1h-1zM55 14h2v1h-2zM63 14h2v1h-2zM67 14h2v1h-2zM72 14h1v1h-1zM77 14h2v1h-2zM82 14h1v1h-1zM3 15h1v1h-1zM12 15h1v1h-1zM19 15h2v1h-2zM28 15h1v1h-1zM32 15h3v1h-3zM44 15h1v1h-1zM48 15h1v1h-1zM55 15h2v1h-2zM72 15h1v1h-1zM75 15h2v1h-2zM80 15h4v1h-4zM85 15h1v1h-1zM10 16h3v1h-3zM19 16h2v1h-2zM28 16h1v1h-1zM31 16h2v1h-2zM44 16h1v1h-1zM46 16h3v1h-3zM55 16h2v1h-2zM69 16h3v1h-3zM79 16h1v1h-1zM83 16h2v1h-2z"/>
<path fill="#00337f" d="M14 482h1v1h-1zM30 482h1v1h-1zM43 482h8v1h-8zM54 482h1v1h-1zM56 482h1v1h-1zM68 482h1v1h-1zM14 483h1v1h-1zM17 483h4v1h-4zM23 483h4v1h-4zM30 483h1v1h-1zM33 483h8v1h-8zM46 483h1v1h-1zM50 483h1v1h-1zM54 483h1v1h-1zM56 483h4v1h-4zM63 483h4v1h-4zM68 483h1v1h-1zM13 484h5v1h-5zM26 484h1v1h-1zM30 484h1v1h-1zM35 484h2v1h-2zM40 484h1v1h-1zM46 484h1v1h-1zM50 484h1v1h-1zM53 484h5v1h-5zM63 484h9v1h-9zM14 485h1v1h-1zM17 485h4v1h-4zM26 485h6v1h-6zM33 485h8v1h-8zM43 485h8v1h-8zM54 485h1v1h-1zM56 485h1v1h-1zM61 485h1v1h-1zM64 485h2v1h-2zM68 485h1v1h-1zM70 485h1v1h-1zM14 486h1v1h-1zM17 486h1v1h-1zM25 486h1v1h-1zM30 486h1v1h-1zM38 486h1v1h-1zM43 486h1v1h-1zM54 486h1v1h-1zM57 486h4v1h-4zM63 486h6v1h-6zM70 486h1v1h-1zM13 487h3v1h-3zM17 487h1v1h-1zM24 487h2v1h-2zM27 487h1v1h-1zM36 487h5v1h-5zM43 487h8v1h-8zM54 487h2v1h-2zM67 487h4v1h-4zM13 488h8v1h-8zM24 488h2v1h-2zM27 488h2v1h-2zM30 488h1v1h-1zM33 488h4v1h-4zM38 488h1v1h-1zM40 488h1v1h-1zM43 488h2v1h-2zM46 488h1v1h-1zM48 488h1v1h-1zM50 488h1v1h-1zM53 488h8v1h-8zM63 488h4v1h-4zM68 488h2v1h-2zM13 489h2v1h-2zM17 489h1v1h-1zM24 489h2v1h-2zM28 489h1v1h-1zM35 489h6v1h-6zM44 489h3v1h-3zM49 489h2v1h-2zM54 489h1v1h-1zM56 489h1v1h-1zM60 489h1v1h-1zM66 489h1v1h-1zM69 489h1v1h-1zM14 490h1v1h-1zM17 490h1v1h-1zM24 490h3v1h-3zM30 490h1v1h-1zM35 490h1v1h-1zM38 490h1v1h-1zM44 490h3v1h-3zM48 490h3v1h-3zM54 490h1v1h-1zM56 490h5v1h-5zM63 490h3v1h-3zM68 490h2v1h-2zM14 491h1v1h-1zM17 491h4v1h-4zM23 491h2v1h-2zM38 491h3v1h-3zM43 491h1v1h-1zM50 491h1v1h-1zM54 491h1v1h-1zM56 491h1v1h-1zM60 491h1v1h-1zM64 491h2v1h-2zM68 491h1v1h-1zM70 491h1v1h-1zM14 492h1v1h-1zM23 492h1v1h-1zM28 492h2v1h-2zM33 492h4v1h-4zM44 492h2v1h-2zM49 492h2v1h-2zM53 492h1v1h-1zM56 492h5v1h-5zM63 492h1v1h-1zM67 492h1v1h-1zM71 492h1v1h-1z"/>
<path fill="#00337f" d="M13 639h2v1h-2zM24 639h1v1h-1zM27 639h3v1h-3zM34 639h1v1h-1zM36 639h1v1h-1zM48 639h1v1h-1zM13 640h3v1h-3zM17 640h5v1h-5zM24 640h1v1h-1zM27 640h1v1h-1zM34 640h1v1h-1zM36 640h4v1h-4zM43 640h4v1h-4zM48 640h1v1h-1zM13 641h2v1h-2zM16 641h1v1h-1zM18 641h1v1h-1zM23 641h5v1h-5zM33 641h5v1h-5zM43 641h9v1h-9zM13 642h2v1h-2zM17 642h4v1h-4zM24 642h1v1h-1zM27 642h1v1h-1zM34 642h1v1h-1zM36 642h1v1h-1zM41 642h1v1h-1zM44 642h2v1h-2zM48 642h1v1h-1zM50 642h1v1h-1zM13 643h6v1h-6zM24 643h1v1h-1zM27 643h1v1h-1zM34 643h1v1h-1zM37 643h4v1h-4zM43 643h6v1h-6zM50 643h1v1h-1zM13 644h1v1h-1zM16 644h1v1h-1zM18 644h3v1h-3zM23 644h3v1h-3zM27 644h1v1h-1zM34 644h2v1h-2zM47 644h4v1h-4zM13 645h1v1h-1zM16 645h1v1h-1zM18 645h3v1h-3zM23 645h5v1h-5zM33 645h8v1h-8zM43 645h4v1h-4zM48 645h2v1h-2zM13 646h2v1h-2zM16 646h1v1h-1zM18 646h1v1h-1zM22 646h3v1h-3zM27 646h1v1h-1zM34 646h1v1h-1zM36 646h1v1h-1zM40 646h1v1h-1zM46 646h1v1h-1zM49 646h1v1h-1zM13 647h1v1h-1zM16 647h1v1h-1zM18 647h1v1h-1zM20 647h1v1h-1zM24 647h1v1h-1zM26 647h1v1h-1zM30 647h2v1h-2zM34 647h1v1h-1zM36 647h5v1h-5zM43 647h3v1h-3zM48 647h2v1h-2zM13 648h1v1h-1zM15 648h3v1h-3zM24 648h1v1h-1zM26 648h1v1h-1zM30 648h2v1h-2zM34 648h1v1h-1zM36 648h1v1h-1zM40 648h1v1h-1zM44 648h2v1h-2zM48 648h1v1h-1zM50 648h1v1h-1zM13 649h1v1h-1zM19 649h3v1h-3zM24 649h1v1h-1zM30 649h2v1h-2zM33 649h1v1h-1zM36 649h5v1h-5zM43 649h1v1h-1zM47 649h1v1h-1zM51 649h1v1h-1z"/>
<path fill="#004d40" d="M43 821h9v1h-9zM45 822h1v1h-1zM49 822h1v1h-1zM45 823h1v1h-1zM49 823h1v1h-1zM45 824h1v1h-1zM49 824h1v1h-1zM43 825h9v1h-9zM45 826h1v1h-1zM49 826h1v1h-1zM45 827h1v1h-1zM49 827h1v1h-1zM45 828h1v1h-1zM49 828h1v1h-1zM44 829h1v1h-1zM49 829h1v1h-1zM43 830h2v1h-2zM49 830h1v1h-1zM43 831h1v1h-1zM49 831h1v1h-1z"/>
<path fill="#004d40" d="M103 820h1v1h-1zM99 821h9v1h-9zM101 823h6v1h-6zM101 824h1v1h-1zM106 824h1v1h-1zM101 825h6v1h-6zM100 826h8v1h-8zM107 827h1v1h-1zM101 828h5v1h-5zM107 828h1v1h-1zM101 829h1v1h-1zM105 829h1v1h-1zM107 829h1v1h-1zM101 830h5v1h-5zM107 830h1v1h-1zM106 831h2v1h-2z"/>
<path fill="#004d40" d="M157 820h1v1h-1zM162 820h2v1h-2zM156 821h1v1h-1zM158 821h5v1h-5zM156 822h1v1h-1zM158 822h1v1h-1zM161 822h1v1h-1zM155 823h2v1h-2zM158 823h1v1h-1zM161 823h1v1h-1zM155 824h2v1h-2zM158 824h1v1h-1zM154 825h3v1h-3zM158 825h7v1h-7zM156 826h1v1h-1zM158 826h1v1h-1zM162 826h1v1h-1zM156 827h1v1h-1zM158 827h1v1h-1zM162 827h1v1h-1zM156 828h1v1h-1zM158 828h1v1h-1zM162 828h1v1h-1zM156 829h1v1h-1zM158 829h1v1h-1zM162 829h1v1h-1zM156 830h1v1h-1zM158 830h1v1h-1zM161 830h4v1h-4zM156 831h1v1h-1zM158 831h2v1h-2zM161 831h1v1h-1zM163 831h2v1h-2z"/>
<path fill="#004d40" d="M216 820h1v1h-1zM216 821h1v1h-1zM211 822h1v1h-1zM216 822h1v1h-1zM211 823h1v1h-1zM216 823h4v1h-4zM211 824h1v1h-1zM214 824h3v1h-3zM219 824h1v1h-1zM211 825h1v1h-1zM214 825h3v1h-3zM211 826h1v1h-1zM214 826h1v1h-1zM216 826h1v1h-1zM218 826h1v1h-1zM211 827h1v1h-1zM213 827h1v1h-1zM217 827h2v1h-2zM211 828h3v1h-3zM217 828h1v1h-1zM217 829h2v1h-2zM216 830h1v1h-1zM218 830h2v1h-2zM214 831h2v1h-2zM219 831h1v1h-1z"/>
</svg>
</body></html>
